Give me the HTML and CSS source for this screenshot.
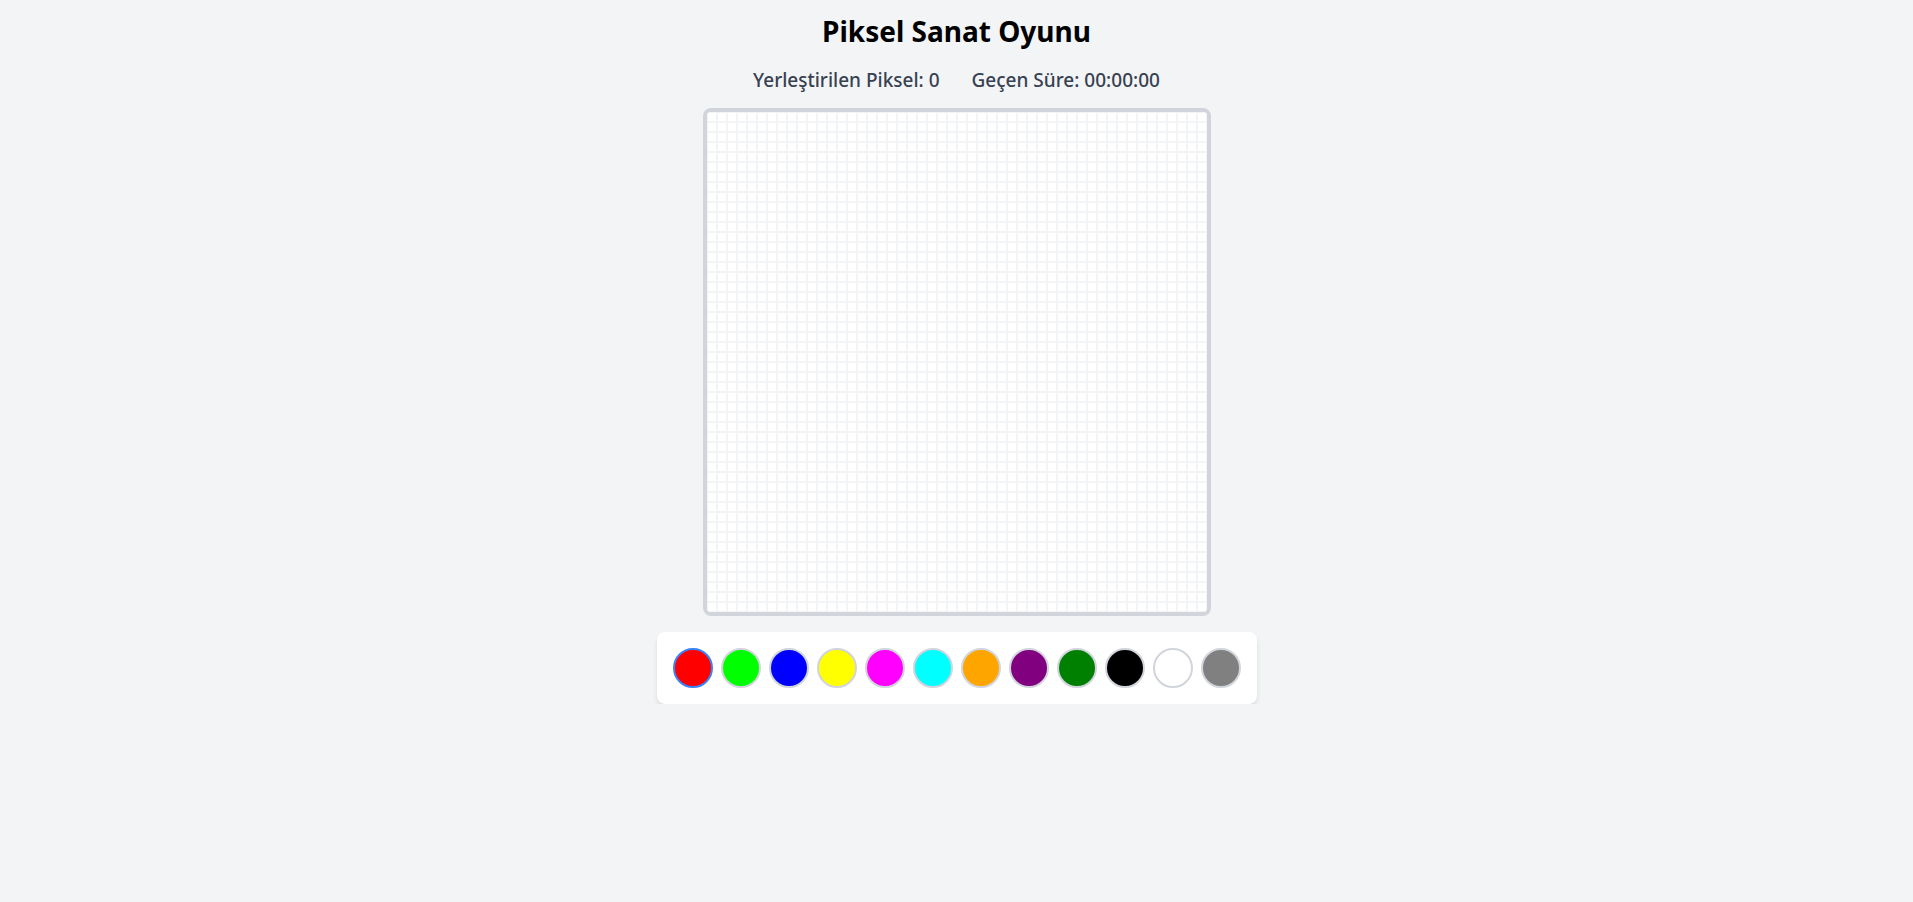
FILE: index.html
```html
<!DOCTYPE html>
<html lang="tr">
<head>
<meta charset="utf-8">
<title>Piksel Sanat Oyunu</title>
<link rel="stylesheet" href="styles.css">
</head>
<body>
<main class="app">
  <h1 class="title">Piksel Sanat Oyunu</h1>
  <div class="stats">
    <span>Yerleştirilen Piksel: 0</span>
    <span>Geçen Süre: 00:00:00</span>
  </div>
  <div class="board"><div class="grid"></div></div>
  <div class="palette">
    <button class="swatch selected" style="background:#ff0000"></button>
    <button class="swatch" style="background:#00ff00"></button>
    <button class="swatch" style="background:#0000ff"></button>
    <button class="swatch" style="background:#ffff00"></button>
    <button class="swatch" style="background:#ff00ff"></button>
    <button class="swatch" style="background:#00ffff"></button>
    <button class="swatch" style="background:#ffa500"></button>
    <button class="swatch" style="background:#800080"></button>
    <button class="swatch" style="background:#008000"></button>
    <button class="swatch" style="background:#000000"></button>
    <button class="swatch" style="background:#ffffff"></button>
    <button class="swatch" style="background:#808080"></button>
  </div>
</main>
</body>
</html>
```

FILE: styles.css
```css
html, body {
  margin: 0;
  padding: 0;
  background: #f3f4f6;
  font-family: "Noto Sans", "Open Sans", sans-serif;
}

.app {
  display: flex;
  flex-direction: column;
  align-items: center;
  padding-top: 13px;
}

.title {
  margin: 0;
  font-size: 28px;
  line-height: 36px;
  font-weight: 700;
  color: #000;
}

.stats {
  display: flex;
  gap: 32px;
  margin-top: 17px;
  font-size: 19px;
  line-height: 28px;
  font-weight: 500;
  color: #374151;
}

.board {
  margin-top: 14px;
  width: 500px;
  height: 500px;
  border: 4px solid #d1d5db;
  border-radius: 8px;
  background: #fff;
  overflow: hidden;
}

.grid {
  width: 100%;
  height: 100%;
  background-image:
    linear-gradient(to right, #f3f4f6 0, #f3f4f6 1px, transparent 1px, transparent 9px, #f3f4f6 9px, #f3f4f6 10px),
    linear-gradient(to bottom, #f3f4f6 0, #f3f4f6 1px, transparent 1px, transparent 9px, #f3f4f6 9px, #f3f4f6 10px);
  background-size: 10px 10px;
}

.palette {
  margin-top: 16px;
  display: flex;
  gap: 8px;
  padding: 16px;
  background: #fff;
  border-radius: 8px;
  box-shadow: 0 4px 6px -1px rgba(0,0,0,0.1), 0 2px 4px -2px rgba(0,0,0,0.1);
}

.swatch {
  width: 40px;
  height: 40px;
  padding: 0;
  border-radius: 50%;
  border: 2px solid #d1d5db;
  cursor: pointer;
}

.swatch.selected {
  border-color: #3b82f6;
}
```
